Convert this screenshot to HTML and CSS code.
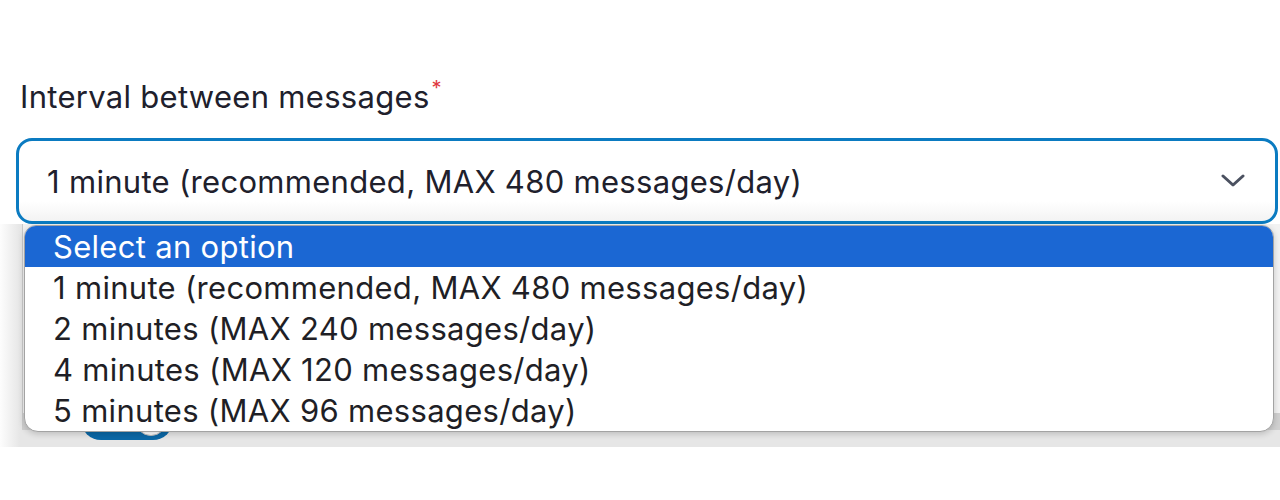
FILE: index.html
```html
<!DOCTYPE html>
<html lang="en">
  <head>
    <meta charset="UTF-8" />
    <meta name="viewport" content="width=device-width, initial-scale=1.0" />
    <title>Interval between messages</title>
    <link rel="stylesheet" href="styles.css">
  </head>
  <body>
    <form class="form">
      <label class="label" for="interval">Interval between messages<span class="required">*</span></label>

      <div class="select-wrap">
        <div class="select" id="interval">
          <span class="select-value">1 minute (recommended, MAX 480 messages/day)</span>
          <svg class="chevron" width="24" height="14" viewBox="0 0 24 14">
            <path d="M2 2 L12 11 L22 2" fill="none" stroke="#4b5160" stroke-width="3" stroke-linecap="round" stroke-linejoin="round" />
          </svg>
        </div>

        <ul class="options">
          <li class="option selected">Select an option</li>
          <li class="option">1 minute (recommended, MAX 480 messages/day)</li>
          <li class="option">2 minutes (MAX 240 messages/day)</li>
          <li class="option">4 minutes (MAX 120 messages/day)</li>
          <li class="option">5 minutes (MAX 96 messages/day)</li>
        </ul>
      </div>

      <!-- section behind the open list -->
      <div class="backdrop">
        <div class="backdrop-inner">
          <span class="toggle"><span class="knob"></span></span>
        </div>
      </div>
    </form>
  </body>
</html>
```

FILE: styles.css
```css
body {
  margin: 0;
  background: #fff;
  font-family: Inter, "Noto Sans", sans-serif;
  color: #20202c;
}

.form {
  padding-top: 78px;
}

.label {
  display: block;
  margin-left: 20px;
  font-size: 31px;
  letter-spacing: 0.3px;
  line-height: 38px;
  height: 60px;
}

.required {
  color: #e0393e;
  font-size: 20px;
  line-height: 20px;
  vertical-align: top;
  margin-left: 2px;
}

.select-wrap {
  position: relative;
  z-index: 2;
}

.select {
  margin-left: 16px;
  width: 1262px;
  height: 86px;
  box-sizing: border-box;
  border: 3px solid #0b7bc1;
  border-radius: 16px;
  background: linear-gradient(#fff 75%, #f3f3f3);
  display: flex;
  align-items: center;
  justify-content: space-between;
  padding: 0 30px 0 28px;
  font-size: 31px;
  letter-spacing: 0.3px;
}

.options {
  position: absolute;
  top: 87px;
  left: 24px;
  width: 1248px;
  margin: 0;
  padding: 0;
  list-style: none;
  background: #fff;
  border: 1px solid #a3a3a3;
  border-radius: 12px 12px 14px 14px;
  overflow: hidden;
  box-shadow: 0 2px 6px rgba(0, 0, 0, 0.18);
}

.option {
  height: 41px;
  line-height: 41px;
  padding-left: 28px;
  font-size: 31px;
  letter-spacing: 0.3px;
  color: #1f1f26;
}

.option.selected {
  background: #1b67d3;
  color: #fff;
}

.backdrop {
  height: 223px;
  background: linear-gradient(90deg, #fdfdfd, #e6e6e6 20px);
}

.backdrop-inner {
  margin-left: 22px;
  height: 206px;
  border-left: 1px solid #c9c9c9;
  border-bottom: 17px solid #d0d0d0;
  background: #f2f2f2;
  padding: 176px 0 0 58px;
  box-sizing: border-box;
}

.toggle {
  display: block;
  width: 92px;
  height: 40px;
  border-radius: 20px;
  background: #0b68a6;
  position: relative;
}

.knob {
  position: absolute;
  right: 6px;
  top: 4px;
  width: 30px;
  height: 30px;
  border-radius: 50%;
  background: #fff;
  border: 1px solid #bbb;
}
```
